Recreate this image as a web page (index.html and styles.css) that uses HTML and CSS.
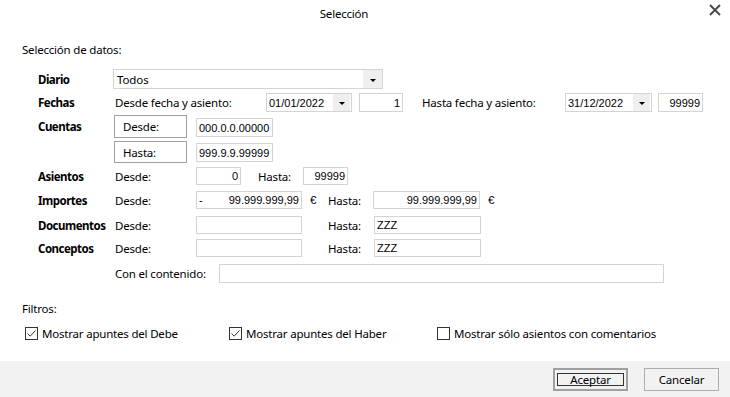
FILE: index.html
```html
<!DOCTYPE html>
<html lang="es">
<head>
  <meta charset="utf-8">
  <title>Selección</title>
  <link rel="stylesheet" href="styles.css">
</head>
<body>
  <div class="dialog">
    <div class="titlebar">
      <span>Selección</span>
      <svg class="close" width="12" height="12" viewBox="0 0 12 12">
        <path d="M1 1 L11 11 M11 1 L1 11" stroke="#4a4a4a" stroke-width="2"/>
      </svg>
    </div>

    <div class="main">
      <div class="section-title">Selección de datos:</div>

      <div class="form">
        <!-- Diario -->
        <div class="row r-diario">
          <div class="lbl">Diario</div>
          <div class="combo w-diario">
            <span class="val">Todos</span>
            <span class="drop"><i class="caret"></i></span>
          </div>
        </div>

        <!-- Fechas -->
        <div class="row r-fechas">
          <div class="lbl">Fechas</div>
          <div class="sub w-fecha-lbl">Desde fecha y asiento:</div>
          <div class="combo w-date">
            <span class="val">01/01/2022</span>
            <span class="drop sm"><i class="caret"></i></span>
          </div>
          <div class="field right w-num gap7">1</div>
          <div class="sub w-fecha-lbl2">Hasta fecha y asiento:</div>
          <div class="combo w-date2">
            <span class="val">31/12/2022</span>
            <span class="drop sm"><i class="caret"></i></span>
          </div>
          <div class="field right w-num2 gap6">99999</div>
        </div>

        <!-- Cuentas -->
        <div class="row r-cuentas">
          <div class="lbl lbl-top">Cuentas</div>
          <div class="cuentas">
            <div class="cuenta">
              <div class="btnbox h23">Desde:</div>
              <div class="field w-cta">000.0.0.00000</div>
            </div>
            <div class="cuenta second">
              <div class="btnbox h22">Hasta:</div>
              <div class="field w-cta">999.9.9.99999</div>
            </div>
          </div>
        </div>

        <!-- Asientos -->
        <div class="row r-asientos">
          <div class="lbl">Asientos</div>
          <div class="sub">Desde:</div>
          <div class="field right w-as">0</div>
          <div class="sub hasta-as">Hasta:</div>
          <div class="field right w-as">99999</div>
        </div>

        <!-- Importes -->
        <div class="row r-importes">
          <div class="lbl">Importes</div>
          <div class="sub">Desde:</div>
          <div class="field split w-imp"><span>-</span><span>99.999.999,99</span></div>
          <div class="euro">€</div>
          <div class="sub hasta-imp">Hasta:</div>
          <div class="field right w-imp2">99.999.999,99</div>
          <div class="euro">€</div>
        </div>

        <!-- Documentos -->
        <div class="row r-docs">
          <div class="lbl">Documentos</div>
          <div class="sub">Desde:</div>
          <div class="field w-imp"></div>
          <div class="sub hasta-doc">Hasta:</div>
          <div class="field w-imp2">ZZZ</div>
        </div>

        <!-- Conceptos -->
        <div class="row r-conc">
          <div class="lbl">Conceptos</div>
          <div class="sub">Desde:</div>
          <div class="field w-imp"></div>
          <div class="sub hasta-doc">Hasta:</div>
          <div class="field w-imp2">ZZZ</div>
        </div>

        <!-- Con el contenido -->
        <div class="row r-cont">
          <div class="lbl"></div>
          <div class="sub w-cont-lbl">Con el contenido:</div>
          <div class="field w-cont"></div>
        </div>
      </div>

      <div class="section-title filtros">Filtros:</div>

      <div class="checks">
        <label class="check c1"><span class="box checked"><svg width="11" height="11" viewBox="0 0 11 11"><path d="M1.5 5.5 L4.2 8.2 L9.5 2.5" fill="none" stroke="#333" stroke-width="1"/></svg></span>Mostrar apuntes del Debe</label>
        <label class="check c2"><span class="box checked"><svg width="11" height="11" viewBox="0 0 11 11"><path d="M1.5 5.5 L4.2 8.2 L9.5 2.5" fill="none" stroke="#333" stroke-width="1"/></svg></span>Mostrar apuntes del Haber</label>
        <label class="check c3"><span class="box"></span>Mostrar sólo asientos con comentarios</label>
      </div>
    </div>

    <div class="footer">
      <div class="button primary"><span class="focus">Aceptar</span></div>
      <div class="button">Cancelar</div>
    </div>
  </div>
</body>
</html>
```

FILE: styles.css
```css
* {
  box-sizing: border-box;
}

body {
  margin: 0;
  font-family: "Noto Sans", sans-serif;
  font-size: 11.5px;
  letter-spacing: -0.2px;
  color: #000;
  background: #fff;
}

.dialog {
  width: 730px;
  height: 397px;
  display: flex;
  flex-direction: column;
  overflow: hidden;
}

.titlebar {
  position: relative;
  height: 28px;
  display: flex;
  align-items: center;
  justify-content: center;
  line-height: 16px;
  padding-right: 42px;
}

.titlebar .close {
  position: absolute;
  right: 9px;
  top: 4px;
}

.main {
  flex: 1;
  padding-left: 22px;
}

.section-title {
  margin-top: 14px;
  line-height: 16px;
}

.section-title.filtros {
  margin-top: 18px;
}

/* formulario */
.form {
  margin-left: 16px;
  margin-top: 11px;
}

.row {
  display: flex;
  align-items: center;
}

.lbl {
  width: 77px;
  font-weight: 700;
  letter-spacing: -0.5px;
  flex-shrink: 0;
}

.lbl-top {
  align-self: flex-start;
  margin-top: 4px;
}

.sub {
  width: 81px;
  flex-shrink: 0;
}

.r-diario { height: 20px; }
.r-fechas { height: 19px; margin-top: 4px; }
.r-cuentas { margin-top: 3px; align-items: flex-start; }
.r-asientos { height: 18px; margin-top: 4px; }
.r-importes { height: 18px; margin-top: 6px; }
.r-docs { height: 18px; margin-top: 7px; }
.r-conc { height: 18px; margin-top: 5px; }
.r-cont { height: 19px; margin-top: 7px; }

.field,
.combo {
  height: 100%;
  border: 1px solid #d4d4d4;
  background: #fff;
  display: flex;
  align-items: center;
  padding: 0 2px;
  font-family: "Liberation Sans", sans-serif;
  font-size: 11px;
  letter-spacing: 0;
  flex-shrink: 0;
}

.field.right {
  justify-content: flex-end;
}

.field.split {
  justify-content: space-between;
}

.combo {
  padding: 0 0 0 2px;
  justify-content: space-between;
}

.drop {
  width: 19px;
  height: 100%;
  background: #efefef;
  display: flex;
  align-items: center;
  justify-content: center;
}

.drop.sm {
  width: 17px;
  margin-right: 1px;
}

.caret {
  width: 0;
  height: 0;
  border-left: 3px solid transparent;
  border-right: 3px solid transparent;
  border-top: 3px solid #000;
  margin-top: 2px;
}

.w-diario {
  width: 270px;
  margin-left: -2px;
  font-family: "Noto Sans", sans-serif;
  font-size: 11.5px;
  letter-spacing: -0.1px;
  padding-left: 3px;
}

.w-fecha-lbl { width: 151px; }
.w-date { width: 86px; }
.w-num { width: 44px; }
.gap7 { margin-left: 7px; }
.w-fecha-lbl2 { width: 143px; margin-left: 19px; }
.w-date2 { width: 87px; }
.w-num2 { width: 45px; }
.gap6 { margin-left: 6px; }

.cuentas {
  display: flex;
  flex-direction: column;
}

.cuenta {
  display: flex;
  align-items: flex-start;
}

.cuenta.second {
  margin-top: 3px;
}

.btnbox {
  width: 73px;
  margin-left: -1px;
  margin-right: 9px;
  border: 1px solid #a0a0a0;
  padding-left: 8px;
  display: flex;
  align-items: center;
}

.h23 { height: 23px; }
.h22 { height: 22px; }

.w-cta {
  width: 77px;
  height: 19px;
  margin-top: 3px;
}

.cuenta.second .w-cta {
  margin-top: 2px;
}

.w-as { width: 45px; }

.hasta-as {
  width: 45px;
  margin-left: 17px;
}

.w-imp { width: 106px; }
.w-imp2 { width: 107px; }

.euro {
  width: 26px;
  padding-left: 8px;
  font-family: "Liberation Sans", sans-serif;
}

.hasta-imp { width: 45px; }

.hasta-doc {
  width: 46px;
  margin-left: 26px;
}

.w-cont-lbl { width: 104px; }
.w-cont { width: 445px; }

/* filtros */
.checks {
  margin-top: 8px;
  height: 16px;
  display: flex;
  align-items: center;
}

.check {
  display: flex;
  align-items: center;
  gap: 4px;
}

.c1 { margin-left: 3px; width: 204px; }
.c2 { width: 208px; }

.box {
  width: 13px;
  height: 13px;
  border: 1px solid #333;
  display: flex;
  align-items: center;
  justify-content: center;
}

/* pie */
.footer {
  height: 36px;
  background: #f2f2f2;
  display: flex;
  align-items: flex-start;
  justify-content: flex-end;
  gap: 16px;
  padding: 7px 11px 0 0;
}

.button {
  width: 75px;
  height: 23px;
  border: 1px solid #adadad;
  background: #f2f2f2;
  display: flex;
  align-items: center;
  justify-content: center;
}

.button.primary {
  border: 2px solid #a0a0a0;
  padding: 2px;
}

.focus {
  width: 100%;
  height: 13px;
  border: 1px solid #333;
  display: flex;
  align-items: center;
  justify-content: center;
  line-height: 12px;
}
```
